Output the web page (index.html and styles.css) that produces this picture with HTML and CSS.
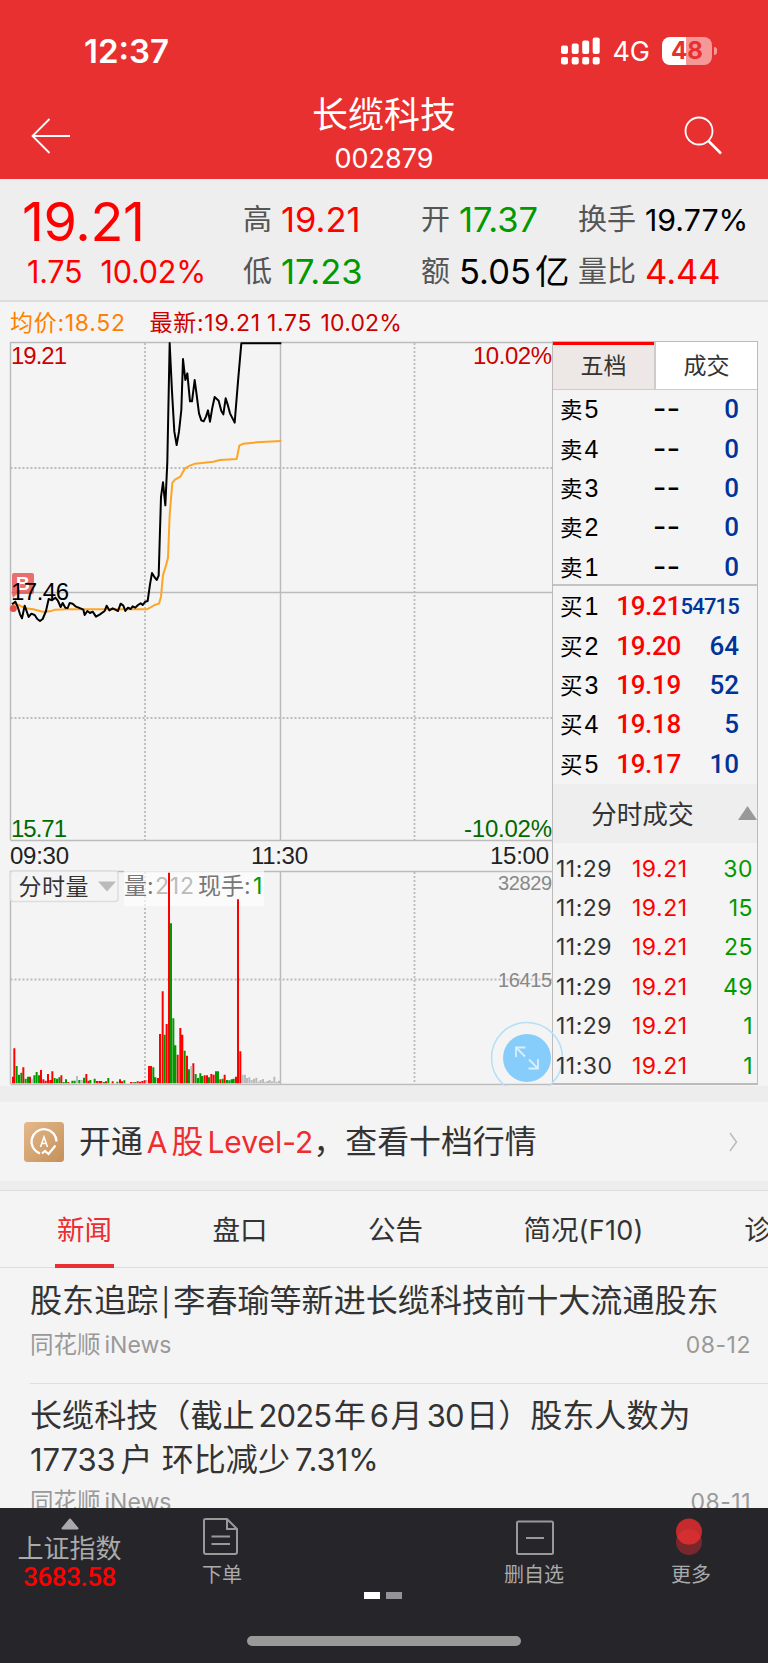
FILE: index.html
```
<!DOCTYPE html>
<html lang="zh-CN">
<head>
    <meta charset="UTF-8">
    <meta name="viewport" content="width=device-width, initial-scale=1.0">
    <title>长缆科技 002879</title>
    <link rel="stylesheet" href="styles.css">
</head>
<body>
    <header class="header">
        <div class="status-bar">
            <span class="clock">12:37</span>
            <div class="status-icons">
                <svg class="signal" width="40" height="28" viewBox="0 0 40 28" fill="#fff">
                    <rect x="0" y="8.500" width="7" height="8.500" rx="2"/>
                    <rect x="10.700" y="6.500" width="7" height="10.500" rx="2"/>
                    <rect x="21.200" y="3.500" width="7" height="13.500" rx="2"/>
                    <rect x="31.700" y="0.500" width="7" height="16.500" rx="2"/>
                    <rect x="0" y="20" width="7" height="7.500" rx="2"/>
                    <rect x="10.700" y="20" width="7" height="7.500" rx="2"/>
                    <rect x="21.200" y="20" width="7" height="7.500" rx="2"/>
                    <rect x="31.700" y="20" width="7" height="7.500" rx="2"/>
                </svg>
                <span class="network">4G</span>
                <span class="battery">48</span>
            </div>
        </div>
        <div class="title-bar">
            <svg class="back" width="42" height="38" viewBox="0 0 42 38" fill="none" stroke="#fff" stroke-width="1.800">
                <path d="M19.500 2L2.500 19L19.500 36M2.500 19H40"/>
            </svg>
            <div class="stock">
                <h1>长缆科技</h1>
                <p>002879</p>
            </div>
            <svg class="search" width="42" height="42" viewBox="0 0 42 42" fill="none" stroke="#fff">
                <circle cx="17" cy="17" r="13.500" stroke-width="1.800"/>
                <path d="M26.500 27L39 39.500" stroke-width="2.500"/>
            </svg>
        </div>
    </header>

    <section class="summary">
        <div class="price">
            <strong>19.21</strong>
            <p><span>1.75</span><span>10.02%</span></p>
        </div>
        <div class="pair">
            <p><label>高</label><b class="up">19.21</b></p>
            <p><label>低</label><b class="down">17.23</b></p>
        </div>
        <div class="pair">
            <p><label>开</label><b class="down">17.37</b></p>
            <p><label>额</label><b>5.05<i>亿</i></b></p>
        </div>
        <div class="pair">
            <p><label>换手</label><b class="small">19.77%</b></p>
            <p><label>量比</label><b class="up">4.44</b></p>
        </div>
    </section>

    <div class="legend">
        <span class="avg">均价:18.52</span>
        <span class="last">最新:19.21 1.75 <i>10.02%</i></span>
    </div>

    <main class="quote">
        <div class="charts">
            <svg class="chart" width="553" height="746" viewBox="0 340 553 746">
                <!-- grid -->
                <g class="grid">
                    <path d="M10.500 840V342.500H552M10.500 592.500H552M10.500 840.500H552M280.500 342V840"/>
                    <path d="M10.500 1084V871.500H552M10.500 1084.500H552M280.500 871V1084"/>
                    <path class="dots" d="M10.500 468H552M10.500 718H552M145 343V840M414.500 343V840M10.500 979.500H552M145 872V1084M414.500 872V1084"/>
                </g>

                <!-- buy marker -->
                <g fill="#e94b4b">
                    <path opacity=".8" d="M14 573H32Q34 573 34 575V592Q34 594 32 594H17L13 598L12 594V575Q12 573 14 573Z"/>
                    <circle cx="13.300" cy="608.500" r="3.500"/>
                </g>
                <text x="16" y="590" class="marker">B</text>

                <g transform="translate(0 335) scale(.33333)" fill="none" stroke-linejoin="round" stroke-width="6">
                    <polyline stroke="#ffa423" points="40,806 56,810 76,820 100,823 128,830 150,829 165,824 200,823 440,823 452,817 464,810 477,806 483,785 489,720 497,695 504,668 509,540 517,444 525,434 541,425 555,400 570,392 585,386 640,380 660,375 710,372 718,332 730,326 770,322 844,318"/>
                    <polyline stroke="#000" points="36,808 46,800 54,818 60,838 66,850 74,812 86,846 94,836 104,840 112,852 120,858 128,852 138,828 146,792 156,796 166,788 174,798 182,816 188,804 196,818 203,819 209,804 218,806 228,815 236,818 250,824 254,840 262,828 270,834 278,830 288,845 300,838 314,828 320,812 328,826 338,820 346,824 354,828 362,806 370,812 376,828 384,818 392,822 398,814 406,818 414,810 422,805 428,810 436,800 443,798 450,748 456,714 462,724 470,735 476,722 483,486 489,442 496,511 502,380 509,24 516,170 523,290 530,330 537,290 544,225 549,72 556,135 562,115 570,199 576,199 584,135 590,180 597,235 604,256 611,259 618,245 624,226 630,260 637,218 644,186 656,197 664,228 670,238 677,190 684,212 690,235 704,263 714,140 724,25 844,25"/>
                </g>

                <g class="scale">
                    <text x="11" y="363.500" textLength="56" fill="#c00">19.21</text>
                    <text x="473" y="363.500" textLength="79" fill="#c00">10.02%</text>
                    <text x="11" y="600" textLength="58" fill="#000">17.46</text>
                    <text x="11" y="836.500" textLength="56" fill="#006a00">15.71</text>
                    <text x="464" y="836.500" textLength="88" fill="#006a00">-10.02%</text>
                    <text x="10" y="863.500" textLength="59">09:30</text>
                    <text x="251" y="863.500" textLength="57">11:30</text>
                    <text x="490" y="863.500" textLength="59">15:00</text>
                </g>
                <g class="scale volume">
                    <text x="498" y="890" textLength="54">32829</text>
                    <text x="498" y="987" textLength="54">16415</text>
                </g>

                <!-- volume indicator picker -->
                <rect x="10.500" y="871" width="107.500" height="30.500" rx="3" fill="#f4f4f4" stroke="#ddd" stroke-width="1.500"/>
                <text class="cjk" x="18.500" y="895" fill="#333" textLength="70">分时量</text>
                <path d="M98 881.500H116L107 891.500Z" fill="#bbb"/>
                <rect x="124" y="870" width="140" height="36" fill="#fff" opacity=".65"/>
                <g class="cjk">
                    <text x="124" y="894" fill="#777">量:</text>
                    <text x="155" y="894" textLength="39" fill="#bbb" class="num">212</text>
                    <text x="198" y="894" fill="#777">现手:</text>
                    <text x="253" y="894" fill="#090" class="num">1</text>
                </g>

                <!-- volume bars -->
                <g transform="translate(0 820) scale(.33333)" fill="none" stroke-width="6">
                    <path stroke="#f00" d="M39 790V770M43 790V685M70 790V742M90 790V770M123 790V750M130 790V778M137 790V782M144 790V762M151 790V780M157 790V754M184 790V766M205 790V786M259 790V762M266 790V782M291 790V783M298 790V783M304 790V783M318 790V784M338 790V784M360 790V778M366 790V784M393 790V786M400 790V787M413 790V784M420 790V785M427 790V783M434 790V781M447 790V738M453 790V738M474 790V774M480 790V642M488 790V514M500 790V612M507 790V158M533 790V704M541 790V624M547 790V644M561 790V707M580 790V730M614 790V766M621 790V766M634 790V762M641 790V764M661 790V778M674 790V764M708 790V770M714 790V238M721 790V694"/>
                    <path stroke="#090" d="M50 790V738M57 790V764M64 790V758M77 790V776M84 790V770M103 790V766M110 790V756M117 790V766M164 790V774M171 790V776M178 790V772M191 790V786M198 790V778M217 790V782M224 790V782M238 790V780M252 790V773M271 790V780M284 790V776M312 790V786M325 790V774M352 790V785M373 790V781M406 790V786M460 790V742M466 790V772M494 790V644M513 790V310M520 790V595M526 790V676M554 790V692M567 790V748M587 790V762M594 790V774M601 790V760M607 790V768M627 790V772M648 790V754M654 790V754M668 790V776M681 790V780M688 790V781M695 790V778M701 790V776"/>
                    <path stroke="#bbb" d="M97 790V778M231 790V768M245 790V780M440 790V780M574 790V738M728 790V764M735 790V764M741 790V774M748 790V772M755 790V780M762 790V776M769 790V773M776 790V785M782 790V780M789 790V777M796 790V785M803 790V783M809 790V780M816 790V784M823 790V770M830 790V785M837 790V782"/>
                </g>
            </svg>
            <svg class="expand" width="74" height="65" viewBox="0 0 74 65" fill="none">
                <circle cx="37" cy="37" r="35.500" stroke="#b5dff8" stroke-width="1.500"/>
                <circle cx="37" cy="37" r="24" fill="#87cdfc"/>
                <path d="M26 36V26.500H35.500M26.500 27L35 35.500M48 38V47.500H38.500M47.500 47L39 38.500" stroke="#d8effd" stroke-width="1.800"/>
            </svg>
        </div>

        <aside class="book">
            <div class="book-tabs">
                <span class="active">五档</span>
                <span>成交</span>
            </div>
            <div class="levels sell">
                <p><span>卖<i>5</i></span><b>--</b><em>0</em></p>
                <p><span>卖<i>4</i></span><b>--</b><em>0</em></p>
                <p><span>卖<i>3</i></span><b>--</b><em>0</em></p>
                <p><span>卖<i>2</i></span><b>--</b><em>0</em></p>
                <p><span>卖<i>1</i></span><b>--</b><em>0</em></p>
            </div>
            <div class="levels buy">
                <p><span>买<i>1</i></span><b>19.21</b><em class="long">54715</em></p>
                <p><span>买<i>2</i></span><b>19.20</b><em>64</em></p>
                <p><span>买<i>3</i></span><b>19.19</b><em>52</em></p>
                <p><span>买<i>4</i></span><b>19.18</b><em>5</em></p>
                <p><span>买<i>5</i></span><b>19.17</b><em>10</em></p>
            </div>
            <div class="ticks-title">分时成交
                <svg width="19" height="14" viewBox="0 0 19 14"><path d="M9.500 0L19 14H0Z" fill="#999"/></svg>
            </div>
            <div class="ticks">
                <p><span>11:29</span><b>19.21</b><em>30</em></p>
                <p><span>11:29</span><b>19.21</b><em>15</em></p>
                <p><span>11:29</span><b>19.21</b><em>25</em></p>
                <p><span>11:29</span><b>19.21</b><em>49</em></p>
                <p><span>11:29</span><b>19.21</b><em>1</em></p>
                <p><span>11:30</span><b>19.21</b><em>1</em></p>
            </div>
        </aside>
    </main>

    <section class="promo">
        <svg class="badge" width="40" height="40" viewBox="0 0 40 40" fill="none">
            <defs>
                <linearGradient id="gold" x1="0" y1="0" x2="1" y2="1">
                    <stop offset="0" stop-color="#e5b98c"/>
                    <stop offset="1" stop-color="#c59059"/>
                </linearGradient>
            </defs>
            <rect width="40" height="40" rx="3.500" fill="url(#gold)"/>
            <path d="M16 31.500A12.500 12.500 0 1 1 32.500 19.500" stroke="#fff" stroke-width="2.200"/>
            <path d="M18 31.500L21 29L24.500 32L31.500 23.500" stroke="#fff" stroke-width="2.200"/>
            <path d="M16.500 25L20 15L23.500 25M17.800 21.500H22.200" stroke="#fff" stroke-width="1.500"/>
        </svg>
        <p>开通<span class="hot"><i>A</i>股<i>Level-2</i></span>，查看十档行情</p>
        <svg class="chevron" width="9" height="20" viewBox="0 0 9 20" fill="none" stroke="#bbb" stroke-width="1.500">
            <path d="M1 1L7.500 10L1 19"/>
        </svg>
    </section>

    <nav class="tabs">
        <span class="active">新闻</span>
        <span>盘口</span>
        <span>公告</span>
        <span>简况<i>(F10)</i></span>
        <span>诊</span>
    </nav>

    <section class="news">
        <article>
            <h2>股东追踪<span class="bar">|</span>李春瑜等新进长缆科技前十大流通股东</h2>
            <p><span>同花顺<i>iNews</i></span><time>08-12</time></p>
        </article>
        <article>
            <h2>长缆科技（截止<i>2025</i>年<i>6</i>月<i>30</i>日）股东人数为<br><i class="first">17733</i>户 环比减少<i class="rate">7.31%</i></h2>
            <p><span>同花顺<i>iNews</i></span><time>08-11</time></p>
        </article>
    </section>

    <footer class="toolbar">
        <div class="tools">
            <div class="index">
                <svg width="20" height="13" viewBox="0 0 20 13"><path d="M10 2.500L17.500 11.500H2.500Z" fill="#aaa" stroke="#aaa" stroke-width="2" stroke-linejoin="round"/></svg>
                <span>上证指数</span>
                <b>3683.58</b>
            </div>
            <div class="tool order">
                <svg width="40" height="40" viewBox="0 0 40 40" fill="none" stroke="#999" stroke-width="2">
                    <path d="M4 2H25L35 12V35Q35 37 33 37H4Q2 37 2 35V3Q2 2 4 2ZM25 2V12H35M9.500 19.500H28M9.500 27H28"/>
                </svg>
                <span>下单</span>
            </div>
            <div class="tool remove">
                <svg width="40" height="40" viewBox="0 0 40 40" fill="none" stroke="#999" stroke-width="2">
                    <rect x="2" y="4.500" width="36" height="32.500" rx="1.500"/>
                    <path d="M11 21H29"/>
                </svg>
                <span>删自选</span>
            </div>
            <div class="tool more">
                <svg width="40" height="40" viewBox="0 0 40 40">
                    <circle cx="18" cy="25" r="13" fill="#78282d"/>
                    <circle cx="18" cy="14.500" r="13" fill="#c52a2d"/>
                    <path d="M6.100 19.750A13 13 0 0 1 29.900 19.750A13 13 0 0 1 6.100 19.750Z" fill="#d52e30"/>
                </svg>
                <span>更多</span>
            </div>
        </div>
        <div class="pager"><span class="on"></span><span></span></div>
        <div class="home"></div>
    </footer>
</body>
</html>
```
FILE: styles.css
```
* {
    box-sizing: border-box;
}
body {
    margin: 0;
    width: 768px;
    height: 1663px;
    overflow: hidden;
    display: flex;
    flex-direction: column;
    background-color: #f4f4f4;
    color: #333;
    font-family: Inter, "Noto Sans CJK SC", sans-serif;
}
h1, h2, p {
    margin: 0;
    font-weight: normal;
}
b, i, em, strong {
    font-weight: normal;
    font-style: normal;
}
svg {
    display: block;
    flex-shrink: 0;
}
.header {
    height: 179px;
    flex-shrink: 0;
    background-color: #e93030;
    color: #fff;
}
.status-bar {
    height: 92px;
    padding: 10px 56px 0 84px;
    display: flex;
    align-items: center;
    justify-content: space-between;
}
.clock {
    font-size: 33px;
    font-weight: 600;
}
.status-icons {
    display: flex;
    align-items: center;
}
.network {
    margin: 1px 12px 0 11px;
    font-size: 27px;
}
.battery {
    width: 50px;
    height: 28px;
    border-radius: 8px;
    background: linear-gradient(90deg, #fff 48%, #f49898 48%);
    color: #e93030;
    font-size: 24px;
    font-weight: 700;
    line-height: 28px;
    text-align: center;
    position: relative;
}
.battery::after {
    content: "";
    position: absolute;
    right: -5px;
    top: 10px;
    width: 3px;
    height: 8px;
    border-radius: 0 3px 3px 0;
    background-color: #f49898;
}
.title-bar {
    height: 87px;
    padding: 0 44px 0 30px;
    display: flex;
    justify-content: space-between;
}
.back {
    margin-top: 25px;
}
.search {
    margin-top: 22px;
}
.stock {
    text-align: center;
    padding-left: 14px;
}
.stock h1 {
    font-size: 36px;
    line-height: 46px;
    font-weight: 400;
}
.stock p {
    margin-top: 6px;
    font-size: 27px;
    line-height: 30px;
}
.summary {
    height: 123px;
    flex-shrink: 0;
    padding-top: 15px;
    display: grid;
    grid-template-columns: 243px 178px 157px 190px;
    background-color: #eee;
    border-bottom: 2px solid #dcdcdc;
}
.price {
    padding-left: 22px;
    color: #f00;
}
.price strong {
    display: block;
    font-size: 54px;
    line-height: 56px;
    letter-spacing: -0.4px;
}
.price p {
    padding-left: 5px;
    display: flex;
    gap: 18px;
    font-size: 30.5px;
    line-height: 44px;
    letter-spacing: -0.2px;
}
.pair p {
    height: 52px;
    display: flex;
    align-items: center;
    white-space: nowrap;
}
.pair label {
    color: #555;
    font-size: 29px;
    line-height: 40px;
    margin: 0 9px 0 0;
}
.pair b {
    color: #000;
    font-size: 34.5px;
    line-height: 40px;
}
.pair b i {
    margin-left: 4px;
}
.pair b.small {
    font-size: 30.3px;
}
.pair .up {
    color: #f00;
}
.pair .down {
    color: #090;
}
.legend {
    height: 38px;
    flex-shrink: 0;
    padding: 0 0 1px 10px;
    display: flex;
    align-items: center;
    gap: 24px;
    font-size: 23px;
    letter-spacing: 0.7px;
    word-spacing: -1px;
}
.avg {
    color: #ff8000;
}
.last {
    color: #c00;
}
.last i {
    margin-left: 2px;
    letter-spacing: 0.2px;
}
.quote {
    height: 746px;
    flex-shrink: 0;
    display: flex;
}
.charts {
    width: 552px;
    position: relative;
}
.grid path {
    fill: none;
    stroke: #bbb;
    stroke-width: 1.5;
}
.grid .dots {
    stroke-width: 1.8;
    stroke-dasharray: 2 2;
}
.scale {
    font-family: "Liberation Sans", sans-serif;
    font-size: 24px;
    fill: #222;
}
.volume {
    font-size: 20px;
    fill: #888;
}
.marker {
    font: bold 19px "Liberation Sans", sans-serif;
    fill: #fff;
}
.cjk {
    font-size: 23px;
}
.num {
    font-family: Inter, sans-serif;
}
.expand {
    position: absolute;
    left: 490px;
    top: 681px;
}
.book {
    width: 206px;
    height: 744px;
    margin-top: 1px;
    border: 1px solid #bbb;
    border-width: 1px 1px 2px 1px;
}
.book-tabs {
    height: 48px;
    display: flex;
    border-bottom: 1px solid #ccc;
    font-size: 23px;
    text-align: center;
    line-height: 49px;
}
.book-tabs span {
    flex: 1;
    background-color: #fff;
}
.book-tabs .active {
    background-color: #ede8e5;
    border-right: 2px solid #ccc;
    box-shadow: inset 0 3px #f00;
}
.levels {
    height: 196px;
    padding: 0 18px 0 7px;
}
.sell {
    border-bottom: 2px solid #c4c4c4;
}
.levels p {
    height: 39.4px;
    display: grid;
    grid-template-columns: 44px 77px 1fr;
    align-items: center;
    font-size: 22.5px;
    line-height: 39px;
    color: #000;
}
.levels p i {
    margin-left: 2px;
    font: 25px "Liberation Sans", sans-serif;
}
.levels b,
.levels em {
    font-family: Roboto, sans-serif;
    font-size: 26px;
    font-weight: 500;
    text-align: right;
    white-space: nowrap;
}
.buy b {
    letter-spacing: -0.3px;
}
.sell b {
    letter-spacing: 1px;
    transform: scaleX(1.4);
    transform-origin: right;
}
.buy {
    height: 198px;
    padding-top: 1px;
}
.buy b {
    color: #f00;
}
.levels em {
    color: #039;
}
.levels .long {
    font-size: 22px;
    letter-spacing: -0.8px;
    margin-left: -4px;
}
.ticks-title {
    height: 59px;
    display: flex;
    align-items: center;
    justify-content: space-between;
    padding: 0 0 2px 38px;
    background-color: #eee;
    font-size: 25.7px;
}
.ticks {
    padding: 6px 4px 0 3px;
    font-size: 23px;
    letter-spacing: 0.5px;
}
.ticks p {
    height: 39.4px;
    display: grid;
    grid-template-columns: 76px 65px 1fr;
    align-items: center;
    position: relative;
}
.ticks b {
    color: #f00;
}
.ticks em {
    color: #090;
    text-align: right;
}
.promo {
    height: 104px;
    flex-shrink: 0;
    padding: 0 30px 0 24px;
    border-top: 16px solid #ededed;
    border-bottom: 9px solid #ededed;
    display: flex;
    align-items: center;
}
.promo p {
    flex: 1;
    margin: -5px 0 0 15px;
    font-size: 31.9px;
}
.hot {
    color: #f02c2f;
}
.promo i {
    font-size: 30px;
    margin: 0 4px;
}
.promo i + i {
    margin-right: 0;
}
.tabs {
    height: 78px;
    flex-shrink: 0;
    border-top: 1px solid #ddd;
    border-bottom: 1px solid #ddd;
    padding-left: 55px;
    display: flex;
    gap: 96.5px;
    font-size: 27.5px;
    line-height: 78px;
    white-space: nowrap;
}
.tabs span {
    height: 77px;
    padding: 0 2px;
}
.tabs .active {
    color: #ea2e31;
    border-bottom: 4px solid #ea2e31;
}
.tabs i {
    font-size: 27px;
    letter-spacing: 0.3px;
}
.news {
    flex: 1;
    overflow: hidden;
    padding-left: 30px;
}
.news article {
    height: 116px;
    padding: 11px 17px 0 0;
    border-bottom: 1px solid #ddd;
}
.news article + article {
    height: 160px;
    padding-top: 10px;
}
.news h2 {
    font-size: 32.1px;
    line-height: 44px;
    white-space: nowrap;
}
.news h2 i {
    font-size: 31px;
    letter-spacing: -0.9px;
    margin: 0 2.5px 0 4px;
}
.news h2 .first {
    margin: 0 5px 0 0;
    letter-spacing: -0.1px;
}
.news h2 .rate {
    margin-left: 5px;
    letter-spacing: -0.1px;
}
.news .bar {
    display: inline-block;
    width: 15px;
    font-size: 27px;
    text-align: center;
}
.news p {
    margin-top: 2px;
    display: flex;
    justify-content: space-between;
    font-size: 23.5px;
    line-height: 36px;
    color: #999;
}
.news p i {
    font-size: 23px;
    margin-left: 4px;
}
.news time {
    font-size: 23px;
    letter-spacing: 0.5px;
}
.toolbar {
    height: 155px;
    flex-shrink: 0;
    background-color: #26252a;
    color: #aaa;
}
.tools {
    height: 84px;
    display: grid;
    grid-template-columns: 202px 302px 167px 1fr;
}
.index {
    width: 139px;
    padding-top: 9px;
    display: flex;
    flex-direction: column;
    align-items: center;
}
.index span {
    margin-top: 2px;
    font-size: 26px;
    line-height: 33px;
}
.index b {
    color: #f00;
    font: 500 26px/25px Roboto, sans-serif;
    letter-spacing: -0.5px;
}
.tool {
    padding-top: 9px;
    font-size: 20px;
}
.tool span {
    display: block;
    margin-top: 3px;
    line-height: 30px;
}
.remove svg {
    margin-left: 11px;
}
.pager {
    display: flex;
    gap: 6px;
    padding-left: 364px;
}
.pager span {
    width: 16px;
    height: 7px;
    background-color: #949397;
}
.pager .on {
    background-color: #fff;
}
.home {
    width: 274px;
    height: 10px;
    margin: 37px 0 0 247px;
    border-radius: 5px;
    background-color: #999;
}
```
